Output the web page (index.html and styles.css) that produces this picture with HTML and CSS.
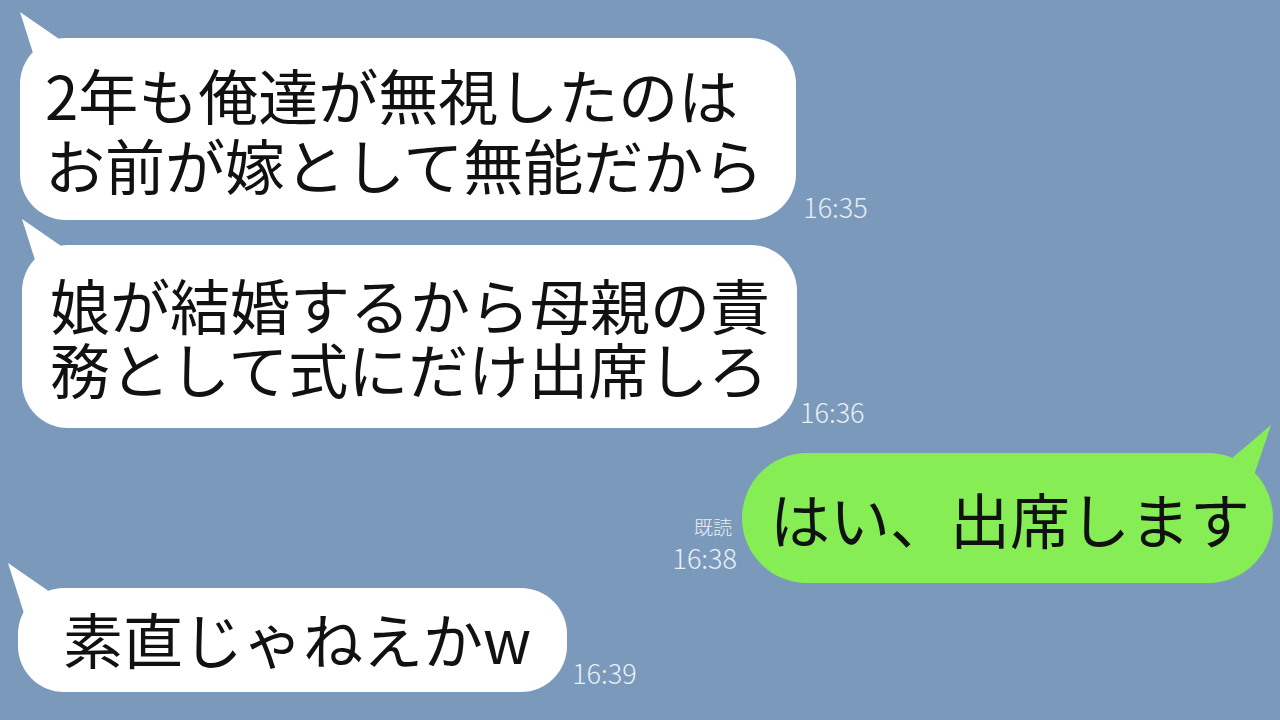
FILE: index.html
```html
<!DOCTYPE html>
<html lang="ja">
<head>
  <meta charset="UTF-8">
  <meta name="viewport" content="width=device-width, initial-scale=1.0">
  <title>トーク</title>
  <link rel="stylesheet" href="styles.css">
</head>
<body>
  <div class="chat">
    <div class="row row-left row-first">
      <div class="bubble bubble-in bubble-1">2年も俺達が無視したのは<br>お前が嫁として無能だから</div>
      <span class="time time-1">16:35</span>
    </div>

    <div class="row row-left row-second">
      <div class="bubble bubble-in bubble-2">娘が結婚するから母親の責<br>務として式にだけ出席しろ</div>
      <span class="time time-2">16:36</span>
    </div>

    <div class="row row-right row-third">
      <div class="meta">
        <span class="read">既読</span>
        <span class="time">16:38</span>
      </div>
      <div class="bubble bubble-out">はい、出席します</div>
    </div>

    <div class="row row-left row-fourth">
      <div class="bubble bubble-in bubble-4">素直じゃねえかw</div>
      <span class="time time-4">16:39</span>
    </div>
  </div>
</body>
</html>
```

FILE: styles.css
```css
body {
  margin: 0;
  height: 720px;
  overflow: hidden;
  background-color: #7b9abb;
  font-family: "Noto Sans CJK JP", "Noto Sans", sans-serif;
}

.chat {
  display: flex;
  flex-direction: column;
  padding-top: 38px;
}

.row {
  display: flex;
  align-items: flex-end;
}

.row-left {
  padding-left: 20px;
}

.row-right {
  justify-content: flex-end;
  padding-right: 7px;
}

.row-second {
  margin-top: 25px;
  padding-left: 22px;
}

.row-third {
  margin-top: 25px;
}

.row-fourth {
  margin-top: 5px;
  padding-left: 18px;
}

/* speech bubbles */
.bubble {
  position: relative;
  font-size: 60px;
  color: #111;
  white-space: nowrap;
}

.bubble::before {
  content: "";
  position: absolute;
  background: inherit;
}

.bubble-in {
  background-color: #ffffff;
  border-radius: 46px;
}

.bubble-in::before {
  left: 0;
  top: -26px;
  width: 56px;
  height: 64px;
  clip-path: polygon(0 0, 55px 38px, 20px 63px);
}

.bubble-1 {
  line-height: 70px;
  padding: 21px 33px 21px 25px;
}

.bubble-2 {
  line-height: 64px;
  padding: 27px 27px 28px 28px;
}

.bubble-4 {
  line-height: 64px;
  padding: 18px 36px 22px 45px;
}

.bubble-4::before {
  left: -10px;
  top: -25px;
}

.bubble-out {
  background-color: #86ed55;
  border-radius: 65px;
  line-height: 70px;
  padding: 30px 23px 30px 28px;
}

.bubble-out::before {
  right: 1px;
  left: auto;
  top: -28px;
  width: 50px;
  height: 66px;
  clip-path: polygon(49px 0, 2px 40px, 27px 65px);
}

/* time stamps and read marker */
.time {
  font-family: "Noto Sans CJK JP", "Noto Sans", sans-serif;
  font-weight: 300;
  font-size: 27px;
  line-height: 1;
  color: #e9eff6;
}

.time-1 {
  margin-left: 7px;
}

.time-2 {
  margin-left: 3px;
  margin-bottom: 3px;
}

.time-4 {
  margin-left: 5px;
  margin-bottom: 6px;
}

.meta {
  display: flex;
  flex-direction: column;
  align-items: flex-end;
  margin-right: 5px;
  margin-bottom: 12px;
}

.read {
  font-size: 19px;
  font-weight: 300;
  line-height: 1;
  color: #e9eff6;
  padding-right: 5px;
  margin-bottom: 8px;
}
```
